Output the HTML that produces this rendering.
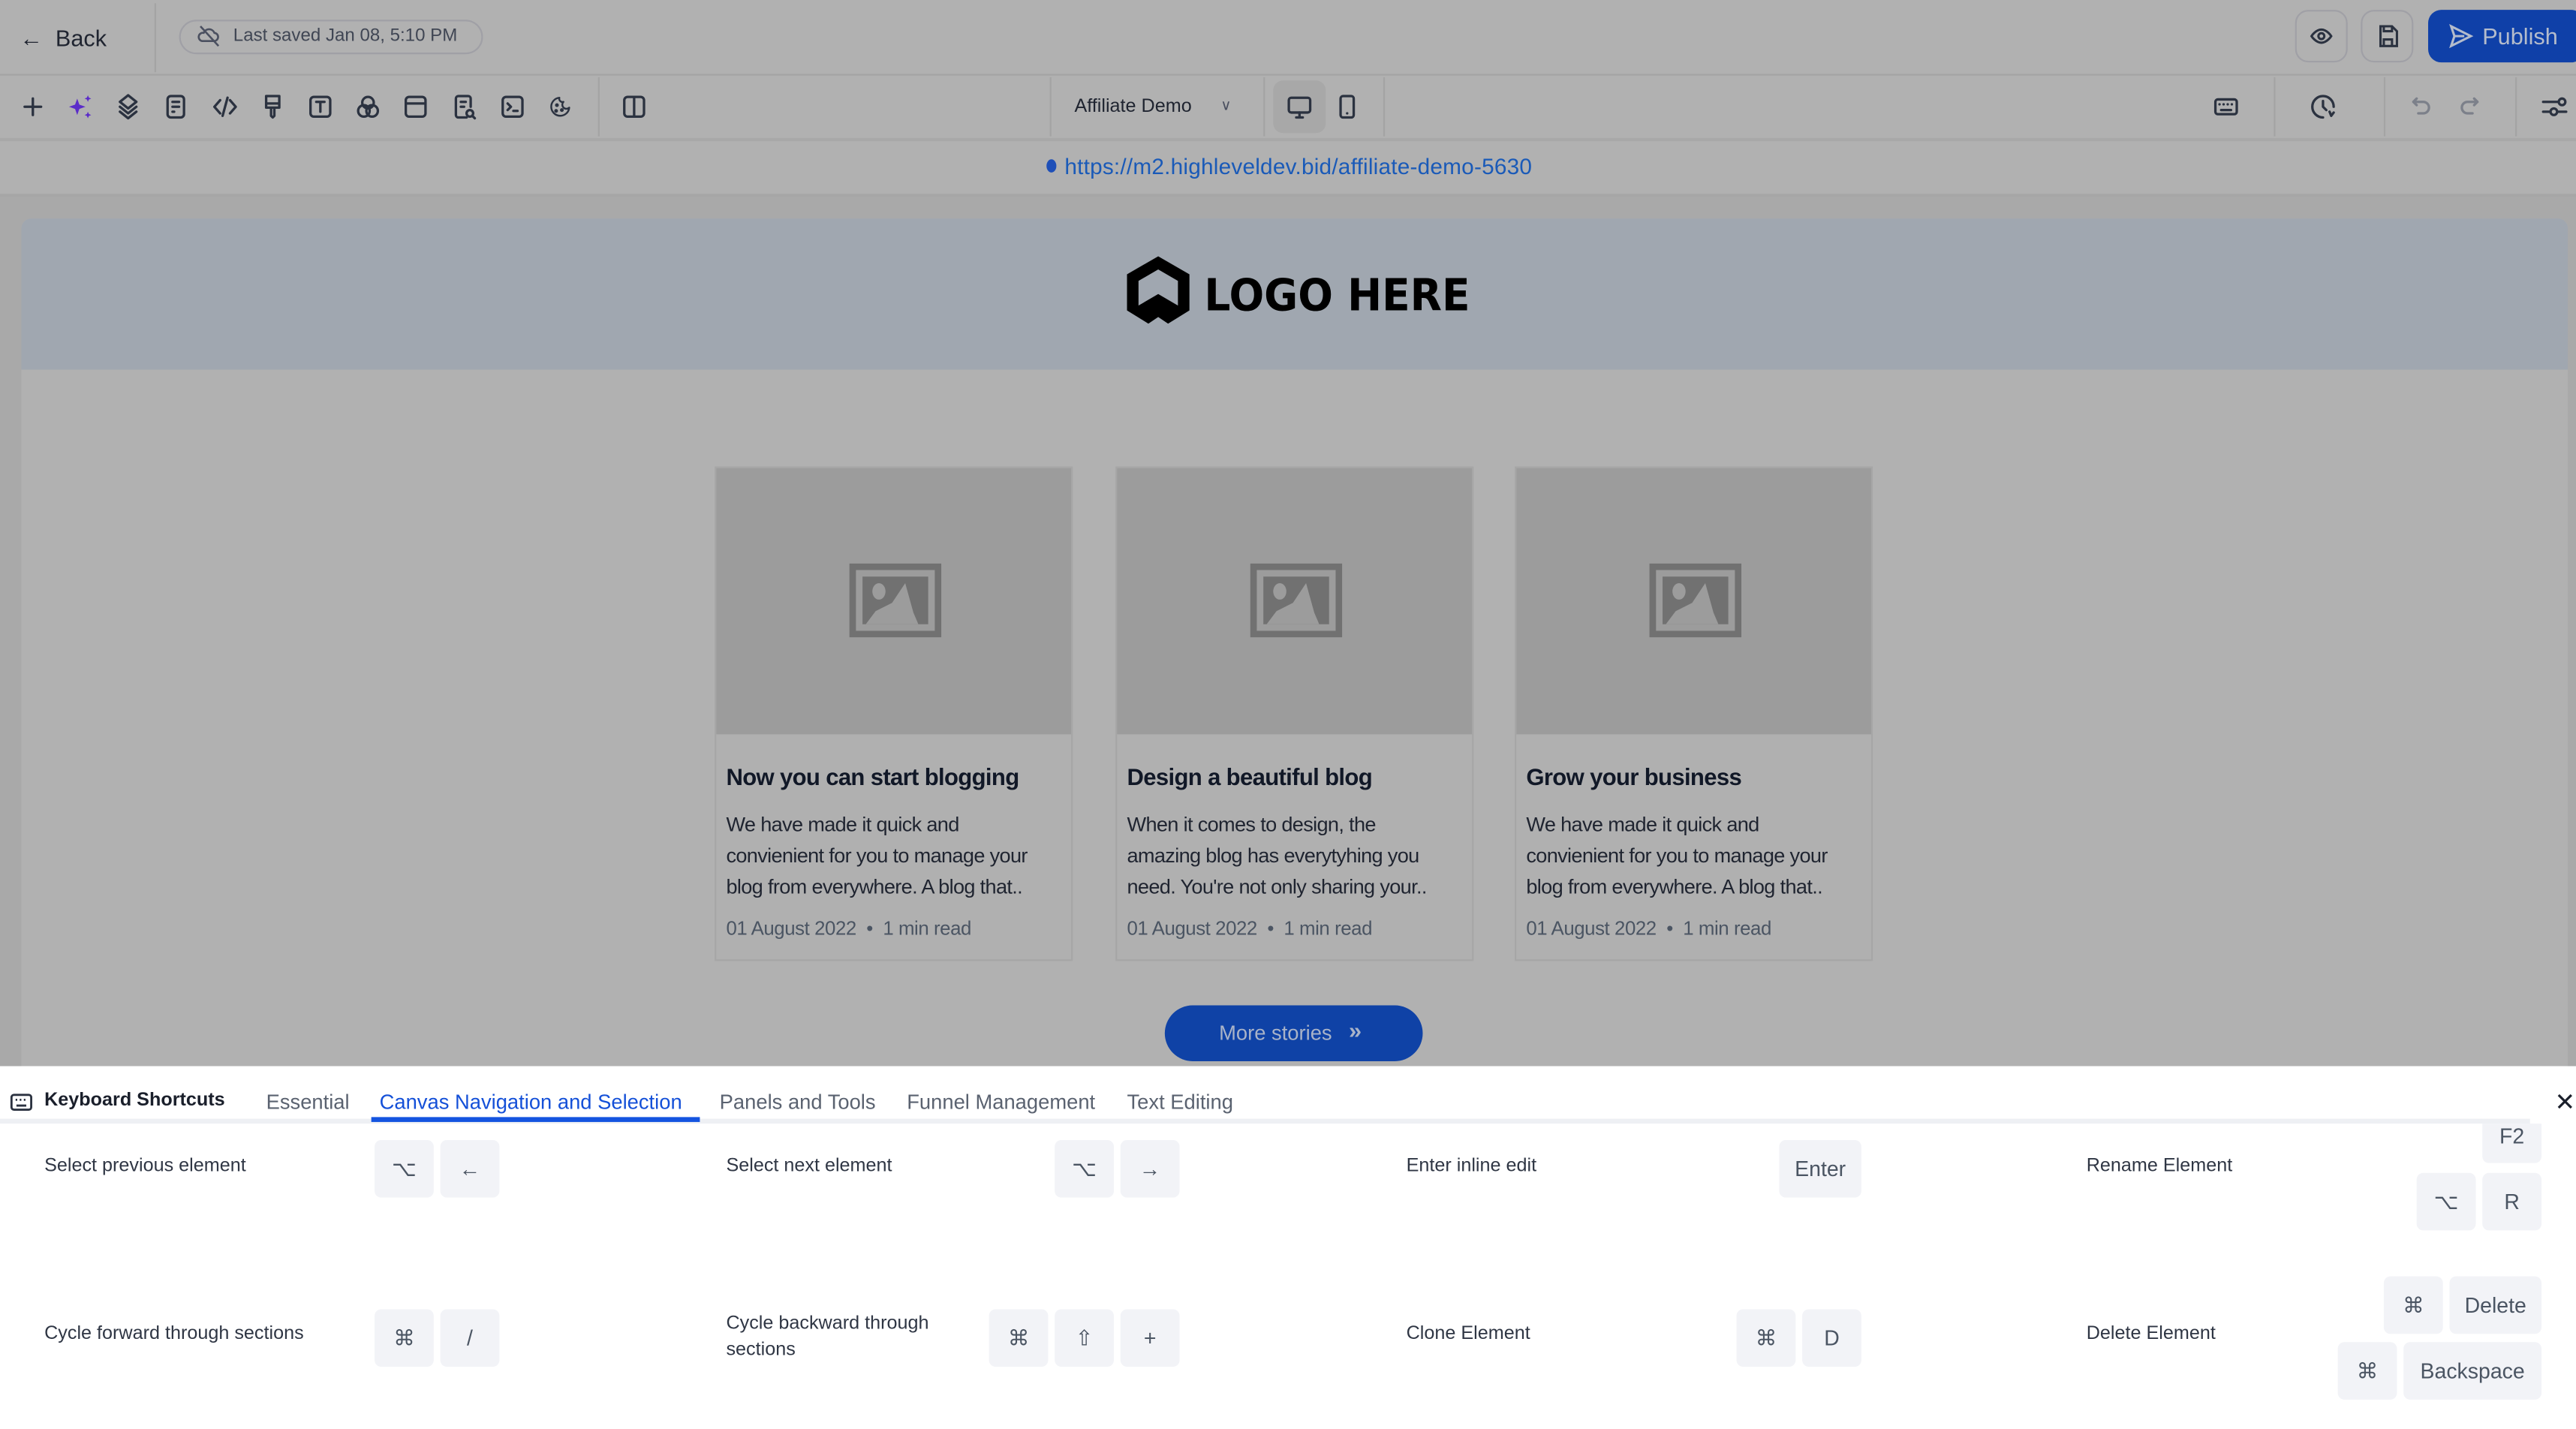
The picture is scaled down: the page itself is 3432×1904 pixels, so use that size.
<!DOCTYPE html>
<html><head><meta charset="utf-8">
<style>
html,body{margin:0;padding:0;width:3432px;height:1904px;overflow:hidden;background:#b1b1b1}
#w{position:absolute;left:0;top:0;width:1568px;height:870px;transform:scale(2.18878);transform-origin:0 0;font-family:"Liberation Sans",sans-serif;background:#b1b1b1;overflow:hidden}
.a{position:absolute}
.ic{position:absolute;top:57px;width:16px;height:16px}
.ic svg{width:16px;height:16px;fill:none;stroke:#2b3240;stroke-width:1.5;stroke-linecap:round;stroke-linejoin:round}
.card{position:absolute;top:284px;width:216px;height:299px;background:#b0b0b0;border:1px solid #a6a6a6}
.card .img{height:162px;background:#9c9c9c;position:relative}
.card .img svg{position:absolute;left:81px;top:58px}
.card h3{margin:0;position:absolute;left:6px;top:181px;font:bold 14.2px "Liberation Sans",sans-serif;color:#111827;letter-spacing:-0.3px}
.card p{margin:0;position:absolute;left:6px;top:208px;white-space:nowrap;font:12.4px/19px "Liberation Sans",sans-serif;color:#1f2430;letter-spacing:-0.3px}
.card .m{position:absolute;left:6px;top:273px;font:11.8px "Liberation Sans",sans-serif;color:#4b5563;letter-spacing:-0.2px}
.lbl{position:absolute;font-size:11.5px;color:#2f3644}
.k{position:absolute;height:35px;min-width:36px;background:#f2f3f7;border-radius:4px;color:#4b5563;font-size:13px;display:flex;align-items:center;justify-content:center;box-sizing:border-box;padding:0 6px}
.tab{position:absolute;top:664px;font-size:12.5px;color:#5a6270}
</style></head><body><div id="w">
<div class="a" style="left:0;top:0;width:1568px;height:45px;border-bottom:1px solid #a4a4a4"></div>
<div class="a" style="left:12px;top:15px;font-size:14px;color:#1f2430">&#8592;&nbsp; Back</div>
<div class="a" style="left:94px;top:2px;width:1px;height:42px;background:#a4a4a4"></div>
<div class="a" style="left:109px;top:12px;width:185px;height:21px;border:1px solid #a0a0a6;border-radius:11px;box-sizing:border-box"></div>
<svg class="a" style="left:120px;top:15px" width="14" height="14" viewBox="0 0 14 14" fill="none" stroke="#4b5060" stroke-width="1.2"><path d="M3 10h7a2.5 2.5 0 0 0 .5-5A3.5 3.5 0 0 0 4 5a2.5 2.5 0 0 0-1 5zM2 1l11 12"/></svg>
<div class="a" style="left:142px;top:16px;font-size:11px;color:#404654">Last saved Jan 08, 5:10 PM</div>
<div class="a" style="left:1397px;top:6px;width:32px;height:32px;border:1px solid #a0a0a6;border-radius:8px;box-sizing:border-box"></div>
<svg class="a" style="left:1406px;top:15px" width="14" height="14" viewBox="0 0 14 14" fill="none" stroke="#2b3240" stroke-width="1.4"><path d="M1 7s2.5-4 6-4 6 4 6 4-2.5 4-6 4-6-4-6-4z"/><circle cx="7" cy="7" r="1.8"/></svg>
<div class="a" style="left:1437px;top:6px;width:32px;height:32px;border:1px solid #a0a0a6;border-radius:8px;box-sizing:border-box"></div>
<svg class="a" style="left:1447px;top:15px" width="13" height="14" viewBox="0 0 13 14" fill="none" stroke="#2b3240" stroke-width="1.4"><path d="M2 1h7l3 3v9H2z M4 1v3h5V1 M4 13V9h5v4"/></svg>
<div class="a" style="left:1478px;top:6px;width:95px;height:32px;background:#0f40a8;border-radius:8px"></div>
<svg class="a" style="left:1490px;top:14px" width="16" height="16" viewBox="0 0 16 16" fill="none" stroke="#b4bccc" stroke-width="1.4"><path d="M2 2l12 6-12 6 2-6zM4 8h6"/></svg>
<div class="a" style="left:1511px;top:14px;font-size:14px;color:#b4bccc">Publish</div>
<div class="a" style="left:0;top:46px;width:1568px;height:38px;border-bottom:2px solid #a8a8a8"></div>
<div class="ic" style="left:12px"><svg viewBox="0 0 16 16"><path d="M8 3v10M3 8h10"/></svg></div>
<div class="ic" style="left:41px"><svg viewBox="0 0 16 16" style="fill:#5b2cc9;stroke:none"><path d="M6 3l1.3 3.7L11 8l-3.7 1.3L6 13l-1.3-3.7L1 8l3.7-1.3zM12.5 1l.6 1.4 1.4.6-1.4.6-.6 1.4-.6-1.4L10.5 3l1.4-.6zM12.5 11l.6 1.4 1.4.6-1.4.6-.6 1.4-.6-1.4-1.4-.6 1.4-.6z"/></svg></div>
<div class="ic" style="left:70px"><svg viewBox="0 0 16 16"><path d="M8 1l5 4-5 4-5-4zM3 8l5 4 5-4M3 11l5 4 5-4"/></svg></div>
<div class="ic" style="left:99px"><svg viewBox="0 0 16 16"><rect x="3" y="1.5" width="10" height="13" rx="2"/><path d="M6 5h4M6 8h4M6 11h1"/></svg></div>
<div class="ic" style="left:129px"><svg viewBox="0 0 16 16"><path d="M5 4L1.5 8 5 12M11 4l3.5 4L11 12M9.5 2.5l-3 11"/></svg></div>
<div class="ic" style="left:158px"><svg viewBox="0 0 16 16"><path d="M4 1.5h8v7H4zM4 6h8M7 8.5v5l1 1 1-1v-5"/></svg></div>
<div class="ic" style="left:187px"><svg viewBox="0 0 16 16"><rect x="2" y="2" width="12" height="12" rx="2"/><path d="M5.5 5h5M8 5v6"/></svg></div>
<div class="ic" style="left:216px"><svg viewBox="0 0 16 16"><circle cx="8" cy="5.5" r="3.5"/><circle cx="5.5" cy="10.5" r="3.5"/><circle cx="10.5" cy="10.5" r="3.5"/></svg></div>
<div class="ic" style="left:245px"><svg viewBox="0 0 16 16"><rect x="2" y="2" width="12" height="12" rx="2"/><path d="M2 6h12"/></svg></div>
<div class="ic" style="left:275px"><svg viewBox="0 0 16 16"><path d="M9 14.5H4a1.5 1.5 0 0 1-1.5-1.5V3A1.5 1.5 0 0 1 4 1.5h6A1.5 1.5 0 0 1 11.5 3v5M5.5 5h3M5.5 8h2"/><circle cx="11" cy="12" r="2"/><path d="M12.5 13.5l1.5 1.5"/></svg></div>
<div class="ic" style="left:304px"><svg viewBox="0 0 16 16"><rect x="2" y="2" width="12" height="12" rx="2"/><path d="M5 6l2 2-2 2M8.5 10.5H11"/></svg></div>
<div class="ic" style="left:333px"><svg viewBox="0 0 16 16" style="stroke-width:1.1"><path d="M13.5 8.5A5.5 5.5 0 1 1 7.5 2.5a2 2 0 0 0 2.5 2.5 2 2 0 0 0 3.5 3.5z"/><circle cx="6" cy="7" r=".6"/><circle cx="9" cy="10" r=".6"/><circle cx="5.5" cy="10.5" r=".6"/></svg></div>
<div class="a" style="left:364px;top:47px;width:1px;height:36px;background:#a4a4a4"></div>
<div class="ic" style="left:378px"><svg viewBox="0 0 16 16"><rect x="2" y="2" width="12" height="12" rx="2"/><path d="M8 2v12"/></svg></div>
<div class="a" style="left:639px;top:47px;width:1px;height:36px;background:#a4a4a4"></div>
<div class="a" style="left:654px;top:59px;font-size:11.5px;color:#1f2430">Affiliate Demo</div>
<div class="a" style="left:743px;top:59px;font-size:9px;color:#4b5060">&#8744;</div>
<div class="a" style="left:769px;top:47px;width:1px;height:36px;background:#a4a4a4"></div>
<div class="a" style="left:775px;top:49px;width:32px;height:32px;background:#a8a8a8;border-radius:6px"></div>
<div class="ic" style="left:783px"><svg viewBox="0 0 16 16"><rect x="1.5" y="2.5" width="13" height="9" rx="1.5"/><path d="M6 14.5h4M8 11.5v3"/></svg></div>
<div class="ic" style="left:812px"><svg viewBox="0 0 16 16"><rect x="4" y="1.5" width="8" height="13" rx="1.5"/><path d="M8 12h.01"/></svg></div>
<div class="a" style="left:842px;top:47px;width:1px;height:36px;background:#a4a4a4"></div>
<div class="ic" style="left:1347px"><svg viewBox="0 0 16 16"><rect x="1.5" y="3.5" width="13" height="9" rx="1.5"/><path d="M5 10h6M4 6.5h.01M6.5 6.5h.01M9 6.5h.01M11.5 6.5h.01"/></svg></div>
<div class="a" style="left:1384px;top:47px;width:1px;height:36px;background:#a4a4a4"></div>
<div class="ic" style="left:1406px"><svg viewBox="0 0 16 16"><path d="M8 14.5A6.5 6.5 0 1 1 14.5 8M8 4.5V8l2 2M12 11l1 2.5 1.5-2"/></svg></div>
<div class="a" style="left:1451px;top:47px;width:1px;height:36px;background:#a4a4a4"></div>
<div class="ic" style="left:1466px"><svg viewBox="0 0 16 16" style="stroke:#7c808a"><path d="M5 3L3 5l2 2M3 5h6a3.5 3.5 0 0 1 0 7H6"/></svg></div>
<div class="ic" style="left:1495px"><svg viewBox="0 0 16 16" style="stroke:#7c808a"><path d="M11 3l2 2-2 2M13 5H7a3.5 3.5 0 0 0 0 7h3"/></svg></div>
<div class="a" style="left:1531px;top:47px;width:1px;height:36px;background:#a4a4a4"></div>
<div class="ic" style="left:1547px"><svg viewBox="0 0 16 16"><path d="M1 5h9M1 11h4"/><circle cx="12.5" cy="5" r="2"/><circle cx="7.5" cy="11" r="2"/><path d="M10 11h5"/></svg></div>
<div class="a" style="left:0;top:86px;width:1568px;height:32px;border-bottom:2px solid #a6a6a6"></div>
<div class="a" style="left:637px;top:97px;width:6px;height:8px;border-radius:50%;background:#1e4fb8"></div>
<div class="a" style="left:648px;top:94px;font-size:13.6px;letter-spacing:0.1px;color:#1a5ab8">https://m2.highleveldev.bid/affiliate-demo-5630</div>
<div class="a" style="left:0;top:120px;width:1568px;height:530px;background:#a9a9a9"></div>
<div class="a" style="left:13px;top:133px;width:1550px;height:520px;background:#b1b1b1;border-radius:6px 6px 0 0;overflow:hidden">
  <div style="height:92px;background:#a0a7b0"></div>
</div>
<svg class="a" style="left:681px;top:155px" width="48" height="48" viewBox="0 0 48 48"><path d="M24 1L43 12v22L30 42l-6-4-6 4L5 34V12z" fill="#000"/><path d="M24 9l12 7v15l-12-7-12 7V16z" fill="#a0a7b0"/><path d="M12 33l12-7 12 7" stroke="#000" stroke-width="1" fill="none"/></svg>
<div class="a" style="left:733px;top:165px;font:900 27px 'DejaVu Sans','Liberation Sans',sans-serif;color:#000;transform:scaleX(0.93);transform-origin:0 0">LOGO HERE</div>

<div class="card" style="left:435px"><div class="img"><svg width="56" height="45" viewBox="0 0 56 45"><rect x="0" y="0" width="56" height="45" fill="#717171"/><rect x="4" y="4" width="48" height="37" fill="#9c9c9c"/><rect x="8" y="8" width="40" height="29" fill="#717171"/><ellipse cx="18" cy="17" rx="4" ry="5" fill="#9c9c9c"/><path d="M10 37l6-8 10-5 8-12 5 18 3 7z" fill="#9c9c9c"/></svg></div>
<h3>Now you can start blogging</h3><p>We have made it quick and<br>convienient for you to manage your<br>blog from everywhere. A blog that..</p><div class="m">01 August 2022 &nbsp;•&nbsp; 1 min read</div></div>
<div class="card" style="left:679px"><div class="img"><svg width="56" height="45" viewBox="0 0 56 45"><rect x="0" y="0" width="56" height="45" fill="#717171"/><rect x="4" y="4" width="48" height="37" fill="#9c9c9c"/><rect x="8" y="8" width="40" height="29" fill="#717171"/><ellipse cx="18" cy="17" rx="4" ry="5" fill="#9c9c9c"/><path d="M10 37l6-8 10-5 8-12 5 18 3 7z" fill="#9c9c9c"/></svg></div>
<h3>Design a beautiful blog</h3><p>When it comes to design, the<br>amazing blog has everytyhing you<br>need. You're not only sharing your..</p><div class="m">01 August 2022 &nbsp;•&nbsp; 1 min read</div></div>
<div class="card" style="left:922px"><div class="img"><svg width="56" height="45" viewBox="0 0 56 45"><rect x="0" y="0" width="56" height="45" fill="#717171"/><rect x="4" y="4" width="48" height="37" fill="#9c9c9c"/><rect x="8" y="8" width="40" height="29" fill="#717171"/><ellipse cx="18" cy="17" rx="4" ry="5" fill="#9c9c9c"/><path d="M10 37l6-8 10-5 8-12 5 18 3 7z" fill="#9c9c9c"/></svg></div>
<h3>Grow your business</h3><p>We have made it quick and<br>convienient for you to manage your<br>blog from everywhere. A blog that..</p><div class="m">01 August 2022 &nbsp;•&nbsp; 1 min read</div></div>

<div class="a" style="left:709px;top:612px;width:157px;height:34px;background:#0f42a6;border-radius:17px"></div>
<div class="a" style="left:742px;top:622px;font-size:12.5px;color:#a9b3c8">More stories</div>
<div class="a" style="left:821px;top:619px;font-size:14px;font-weight:bold;color:#a9b3c8">»</div>

<div class="a" style="left:0;top:649px;width:1568px;height:221px;background:#fff"></div>
<div class="a" style="left:0;top:681px;width:1540px;height:3px;background:#eef0f4"></div>
<div class="a" style="left:226px;top:680px;width:200px;height:3px;background:#1454e0"></div>
<svg class="a" style="left:6px;top:665px" width="14" height="12" viewBox="0 0 14 12" fill="none" stroke="#2b3240" stroke-width="1.3"><rect x="1" y="1.5" width="12" height="9" rx="1.5"/><path d="M4 8h6M3.5 4.5h1M6 4.5h1M8.5 4.5h1"/></svg>
<div class="a" style="left:27px;top:664px;font-size:11.5px;font-weight:bold;color:#1a1f2b">Keyboard Shortcuts</div>
<div class="tab" style="left:162px">Essential</div>
<div class="tab" style="left:231px;color:#1450d8">Canvas Navigation and Selection</div>
<div class="tab" style="left:438px">Panels and Tools</div>
<div class="tab" style="left:552px">Funnel Management</div>
<div class="tab" style="left:686px">Text Editing</div>
<div class="a" style="left:1555px;top:662px;font-size:15px;color:#1a1f2b">✕</div>

<div class="lbl" style="left:27px;top:704px">Select previous element</div>
<div class="k" style="left:228px;top:694px">⌥</div><div class="k" style="left:268px;top:694px">←</div>
<div class="lbl" style="left:442px;top:704px">Select next element</div>
<div class="k" style="left:642px;top:694px">⌥</div><div class="k" style="left:682px;top:694px">→</div>
<div class="lbl" style="left:856px;top:704px">Enter inline edit</div>
<div class="k" style="left:1083px;top:694px;width:50px">Enter</div>
<div class="lbl" style="left:1270px;top:704px">Rename Element</div>
<div class="k" style="left:1511px;top:684px;height:24px;border-radius:0 0 4px 4px;align-items:flex-start">F2</div>
<div class="k" style="left:1471px;top:714px">⌥</div><div class="k" style="left:1511px;top:714px">R</div>

<div class="lbl" style="left:27px;top:806px">Cycle forward through sections</div>
<div class="k" style="left:228px;top:797px">⌘</div><div class="k" style="left:268px;top:797px">/</div>
<div class="lbl" style="left:442px;top:798px;line-height:16px">Cycle backward through<br>sections</div>
<div class="k" style="left:602px;top:797px">⌘</div><div class="k" style="left:642px;top:797px">⇧</div><div class="k" style="left:682px;top:797px">+</div>
<div class="lbl" style="left:856px;top:806px">Clone Element</div>
<div class="k" style="left:1057px;top:797px">⌘</div><div class="k" style="left:1097px;top:797px">D</div>
<div class="lbl" style="left:1270px;top:806px">Delete Element</div>
<div class="k" style="left:1451px;top:777px">⌘</div><div class="k" style="left:1491px;top:777px;width:56px">Delete</div>
<div class="k" style="left:1423px;top:817px">⌘</div><div class="k" style="left:1463px;top:817px;width:84px">Backspace</div>
</div></body></html>
